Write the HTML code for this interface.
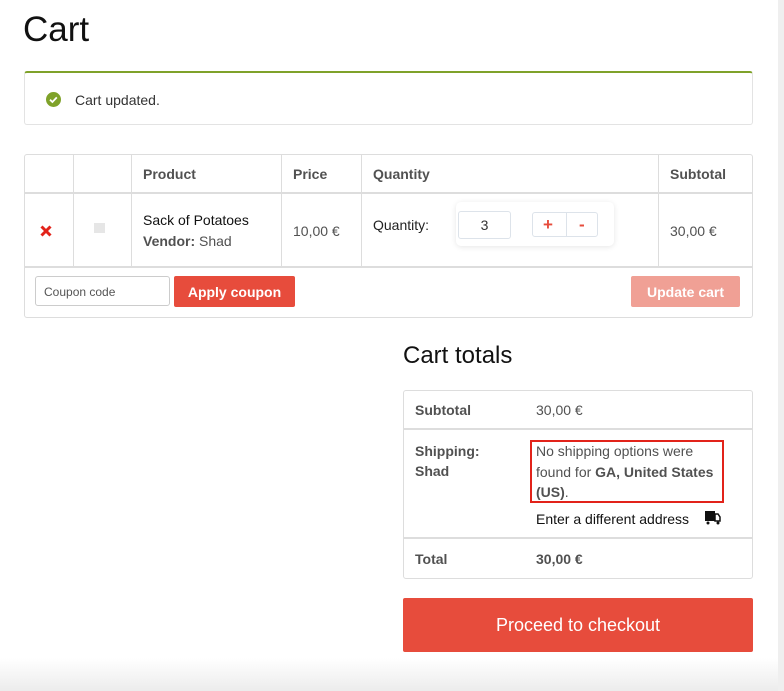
<!DOCTYPE html>
<html><head><meta charset="utf-8"><style>
*{box-sizing:border-box;margin:0;padding:0}
body{width:784px;height:691px;background:#fff;font-family:"Liberation Sans",Arial,sans-serif;position:relative;overflow:hidden;color:#515151}
.a{position:absolute}
.b{font-weight:bold}
.vl{position:absolute;width:1px;background:#ddd}
.hl{position:absolute;height:1px;background:#ddd}
</style></head><body>
<div class="a" style="left:0;top:658px;width:784px;height:33px;background:linear-gradient(#fff,#ececec)"></div>
<div class="a" style="right:0;top:0;width:6px;height:691px;background:#efefef"></div>
<div class="a" style="left:23px;top:10px;font-size:35px;color:#111">Cart</div>

<div class="a" style="left:24px;top:71px;width:729px;height:54px;border:1px solid #e3e3e3;border-top:2px solid #7fa22a;border-radius:3px"></div>
<div class="a" style="left:46px;top:92px;width:15px;height:15px;border-radius:50%;background:#7fa22a"><svg width="15" height="15"><path d="M4 7.7l2.4 2.3 4.4-4.6" stroke="#fff" stroke-width="1.8" fill="none"/></svg></div>
<div class="a" style="left:75px;top:92px;font-size:14px;color:#333">Cart updated.</div>

<div class="a" style="left:24px;top:154px;width:729px;height:164px;border:1px solid #ddd;border-radius:3px"></div>
<div class="hl" style="left:25px;top:192px;width:727px;height:2px"></div>
<div class="hl" style="left:25px;top:266px;width:727px;height:2px"></div>
<div class="vl" style="left:73px;top:155px;height:112px"></div>
<div class="vl" style="left:131px;top:155px;height:112px"></div>
<div class="vl" style="left:281px;top:155px;height:112px"></div>
<div class="vl" style="left:361px;top:155px;height:112px"></div>
<div class="vl" style="left:658px;top:155px;height:112px"></div>
<div class="a b" style="left:143px;top:166px;font-size:14px">Product</div>
<div class="a b" style="left:293px;top:166px;font-size:14px">Price</div>
<div class="a b" style="left:373px;top:166px;font-size:14px">Quantity</div>
<div class="a b" style="left:670px;top:166px;font-size:14px">Subtotal</div>
<svg class="a" style="left:40px;top:225px" width="12" height="12"><path d="M1.5 1.5l9 9M10.5 1.5l-9 9" stroke="#e2231a" stroke-width="3"/></svg>
<div class="a" style="left:94px;top:223px;width:11px;height:10px;background:#e6e6e6"></div>
<div class="a" style="left:143px;top:212px;font-size:14px;color:#111">Sack of Potatoes</div>
<div class="a" style="left:143px;top:233px;font-size:14px"><span class="b">Vendor:</span> Shad</div>
<div class="a" style="left:293px;top:223px;font-size:14px">10,00 €</div>
<div class="a" style="left:373px;top:217px;font-size:14px;color:#222">Quantity:</div>
<div class="a" style="left:456px;top:202px;width:158px;height:44px;background:#fff;border-radius:5px;box-shadow:0 1px 6px rgba(0,0,0,.1)"></div>
<div class="a" style="left:458px;top:211px;width:53px;height:28px;border:1px solid #dde3ea;border-radius:3px;text-align:center;font-size:14px;line-height:26px;color:#333">3</div>
<div class="a" style="left:532px;top:212px;width:66px;height:25px;border:1px solid #dde3ea;border-radius:3px"></div>
<div class="vl" style="left:566px;top:213px;height:23px;background:#dde3ea"></div>
<div class="a b" style="left:543px;top:216px;font-size:17px;color:#e74c3c;line-height:17px">+</div>
<div class="a b" style="left:579px;top:216px;font-size:17px;color:#e74c3c;line-height:17px">-</div>
<div class="a" style="left:670px;top:223px;font-size:14px">30,00 €</div>
<div class="a" style="left:35px;top:276px;width:135px;height:30px;border:1px solid #ccc;border-radius:3px;font-size:12px;line-height:30px;padding-left:8px;color:#555">Coupon code</div>
<div class="a b" style="left:174px;top:276px;width:121px;height:31px;background:#e74c3c;border-radius:2px;color:#fff;font-size:14px;text-align:center;line-height:32px">Apply coupon</div>
<div class="a b" style="left:631px;top:276px;width:109px;height:31px;background:#f0a095;border-radius:2px;color:#fff;font-size:14px;text-align:center;line-height:32px">Update cart</div>

<div class="a" style="left:403px;top:342px;font-size:24px;color:#111">Cart totals</div>
<div class="a" style="left:403px;top:390px;width:350px;height:189px;border:1px solid #ddd;border-radius:3px"></div>
<div class="hl" style="left:404px;top:428px;width:348px;height:2px"></div>
<div class="hl" style="left:404px;top:537px;width:348px;height:2px"></div>
<div class="a b" style="left:415px;top:402px;font-size:14px">Subtotal</div>
<div class="a" style="left:536px;top:402px;font-size:14px">30,00 €</div>
<div class="a b" style="left:415px;top:441px;font-size:14px;line-height:20px">Shipping:<br>Shad</div>
<div class="a" style="left:536px;top:441px;font-size:14px;line-height:20.5px;width:200px">No shipping options were<br>found for <b>GA, United States</b><br><b>(US)</b>.</div>
<div class="a" style="left:530px;top:440px;width:194px;height:63px;border:2px solid #e2231a"></div>
<div class="a" style="left:536px;top:511px;font-size:14px;color:#111">Enter a different address</div>
<svg class="a" style="left:705px;top:511px" width="16" height="14"><rect x="0" y="0" width="10" height="10" fill="#111"/><path d="M10 3h3l2 3v4h-5z" fill="none" stroke="#111" stroke-width="1.5"/><circle cx="3" cy="12" r="1.5" fill="#111"/><circle cx="13" cy="12" r="1.5" fill="#111"/></svg>
<div class="a b" style="left:415px;top:551px;font-size:14px">Total</div>
<div class="a b" style="left:536px;top:551px;font-size:14px">30,00 €</div>
<div class="a" style="left:403px;top:598px;width:350px;height:54px;background:#e74c3c;border-radius:2px;color:#fff;font-size:18px;text-align:center;line-height:54px">Proceed to checkout</div>
</body></html>
